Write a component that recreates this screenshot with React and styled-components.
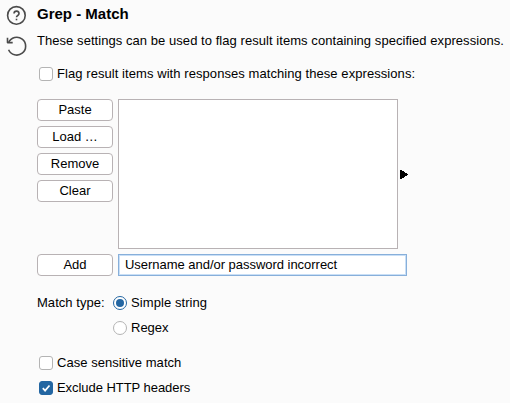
import React from "react";
import styled, { createGlobalStyle } from "styled-components";

const GlobalStyle = createGlobalStyle`
  * { box-sizing: border-box; }
  body {
    margin: 0;
    background: #fbfbfb;
    color: #000;
    font: 13px/16px "Liberation Sans", Arial, sans-serif;
    overflow: hidden;
  }
`;

const Panel = styled.main`
  display: flex;
  width: 510px;
  height: 403px;
  background: #fbfbfb;
`;

const IconRail = styled.aside`
  display: flex;
  flex-direction: column;
  gap: 9px;
  width: 37px;
  padding: 5px 0 0 6px;
`;

const RailIcon = styled.svg`
  display: block;
  width: 22px;
  height: 22px;
  fill: none;
  stroke: #4b4b4b;
  stroke-width: 1.6;
  stroke-linejoin: round;
`;

const Content = styled.section`
  flex: 1;
  white-space: nowrap;
`;

const Title = styled.h1`
  margin: 5px 0 0;
  font-size: 15px;
  line-height: 17px;
  font-weight: bold;
`;

const Description = styled.p`
  margin: 11px 0 17px;
  letter-spacing: 0.055px;
`;

const Option = styled.label`
  display: flex;
  align-items: center;
  gap: 4px;
  height: 16px;
  padding-left: ${(p) => p.$indent}px;
  letter-spacing: ${(p) => p.$tracking || 0}px;
`;

const Mark = styled.span`
  display: flex;
  align-items: center;
  justify-content: center;
  flex: none;
  width: 14px;
  height: 14px;
  border: 1px solid ${(p) => (p.$on ? "#2366a2" : "#b4b4b4")};
  border-radius: ${(p) => (p.$round ? "50%" : "3px")};
  background: ${(p) => (p.$on && !p.$round ? "#2366a2" : "#fff")};
`;

const Dot = styled.span`
  width: 8px;
  height: 8px;
  border-radius: 50%;
  background: #2366a2;
`;

const Tick = styled.svg`
  width: 12px;
  height: 12px;
  flex: none;
  fill: none;
  stroke: #fff;
  stroke-width: 1.7;
`;

const ListEditor = styled.div`
  display: flex;
  margin-top: 17px;
  gap: 5px;
`;

const ButtonColumn = styled.div`
  display: flex;
  flex-direction: column;
  gap: 5px;
`;

const Button = styled.button`
  width: 76px;
  height: 22px;
  padding: 0 0 1px;
  border: 1px solid #b8b2b4;
  border-radius: 4px;
  background: #fff;
  color: #000;
  font: inherit;
`;

const ListBox = styled.div`
  width: 280px;
  height: 150px;
  border: 1px solid #b8b2b4;
  background: #fff;
`;

const Expander = styled.svg`
  align-self: center;
  width: 8px;
  height: 9px;
  margin: 1px 0 0 -3px;
`;

const AddRow = styled.div`
  display: flex;
  gap: 5px;
  margin-top: 5px;
`;

const TextField = styled.input`
  width: 289px;
  height: 22px;
  padding: 0 6px 1px;
  border: 1px solid #87afda;
  outline: none;
  box-shadow: inset 0 0 0 1px #c9dff6;
  background: #fff;
  color: #000;
  font: inherit;
  letter-spacing: -0.03px;
`;

const MatchType = styled.div`
  display: flex;
  gap: 7px;
  margin-top: 19px;
`;

const MatchLabel = styled.span`
  width: 69px;
  letter-spacing: 0.04px;
`;

const Stack = styled.div`
  display: flex;
  flex-direction: column;
  gap: 9px;
  margin-top: ${(p) => p.$top}px;
`;

function CheckOption({ on, tracking, children }) {
  return (
    <Option $indent={2} $tracking={tracking}>
      <Mark $on={on}>
        {on && <Tick viewBox="0 0 12 12"><path d="M2.8 6.1 5.1 8.6 9.5 3.5" /></Tick>}
      </Mark>
      {children}
    </Option>
  );
}

function RadioOption({ on, tracking, children }) {
  return (
    <Option $indent={0} $tracking={tracking}>
      <Mark $round $on={on}>{on && <Dot />}</Mark>
      {children}
    </Option>
  );
}

export default function App() {
  return (
    <>
      <GlobalStyle />
      <Panel>
        <IconRail>
          <RailIcon viewBox="0 0 22 22">
            <circle cx="10.4" cy="10.4" r="8.8" />
            <path d="M8 8.5a2.5 2.5 0 0 1 5 .2c0 1.7-2.5 1.9-2.5 3.5" />
            <path d="M10.5 13.7v1.6" />
          </RailIcon>
          <RailIcon viewBox="0 0 22 22">
            <path d="M1.5 1.8v4.8h5.2" />
            <path d="M2.6 6.6A8.9 8.9 0 1 1 2.6 13.8" />
          </RailIcon>
        </IconRail>
        <Content>
          <Title>Grep - Match</Title>
          <Description>
            These settings can be used to flag result items containing specified expressions.
          </Description>
          <CheckOption tracking={0.068}>
            Flag result items with responses matching these expressions:
          </CheckOption>
          <ListEditor>
            <ButtonColumn>
              <Button>Paste</Button>
              <Button>Load …</Button>
              <Button>Remove</Button>
              <Button>Clear</Button>
            </ButtonColumn>
            <ListBox />
            <Expander viewBox="0 0 8 9" shapeRendering="crispEdges">
              <path d="M0 0h2v1h2v1h1v1h2v1h1v1H7v1H5v1H4v1H2v1H0z" />
            </Expander>
          </ListEditor>
          <AddRow>
            <Button>Add</Button>
            <TextField defaultValue="Username and/or password incorrect" />
          </AddRow>
          <MatchType>
            <MatchLabel>Match type:</MatchLabel>
            <Stack $top={0}>
              <RadioOption on tracking={0.08}>Simple string</RadioOption>
              <RadioOption>Regex</RadioOption>
            </Stack>
          </MatchType>
          <Stack $top={19}>
            <CheckOption tracking={0.04}>Case sensitive match</CheckOption>
            <CheckOption on tracking={-0.05}>Exclude HTTP headers</CheckOption>
          </Stack>
        </Content>
      </Panel>
    </>
  );
}
